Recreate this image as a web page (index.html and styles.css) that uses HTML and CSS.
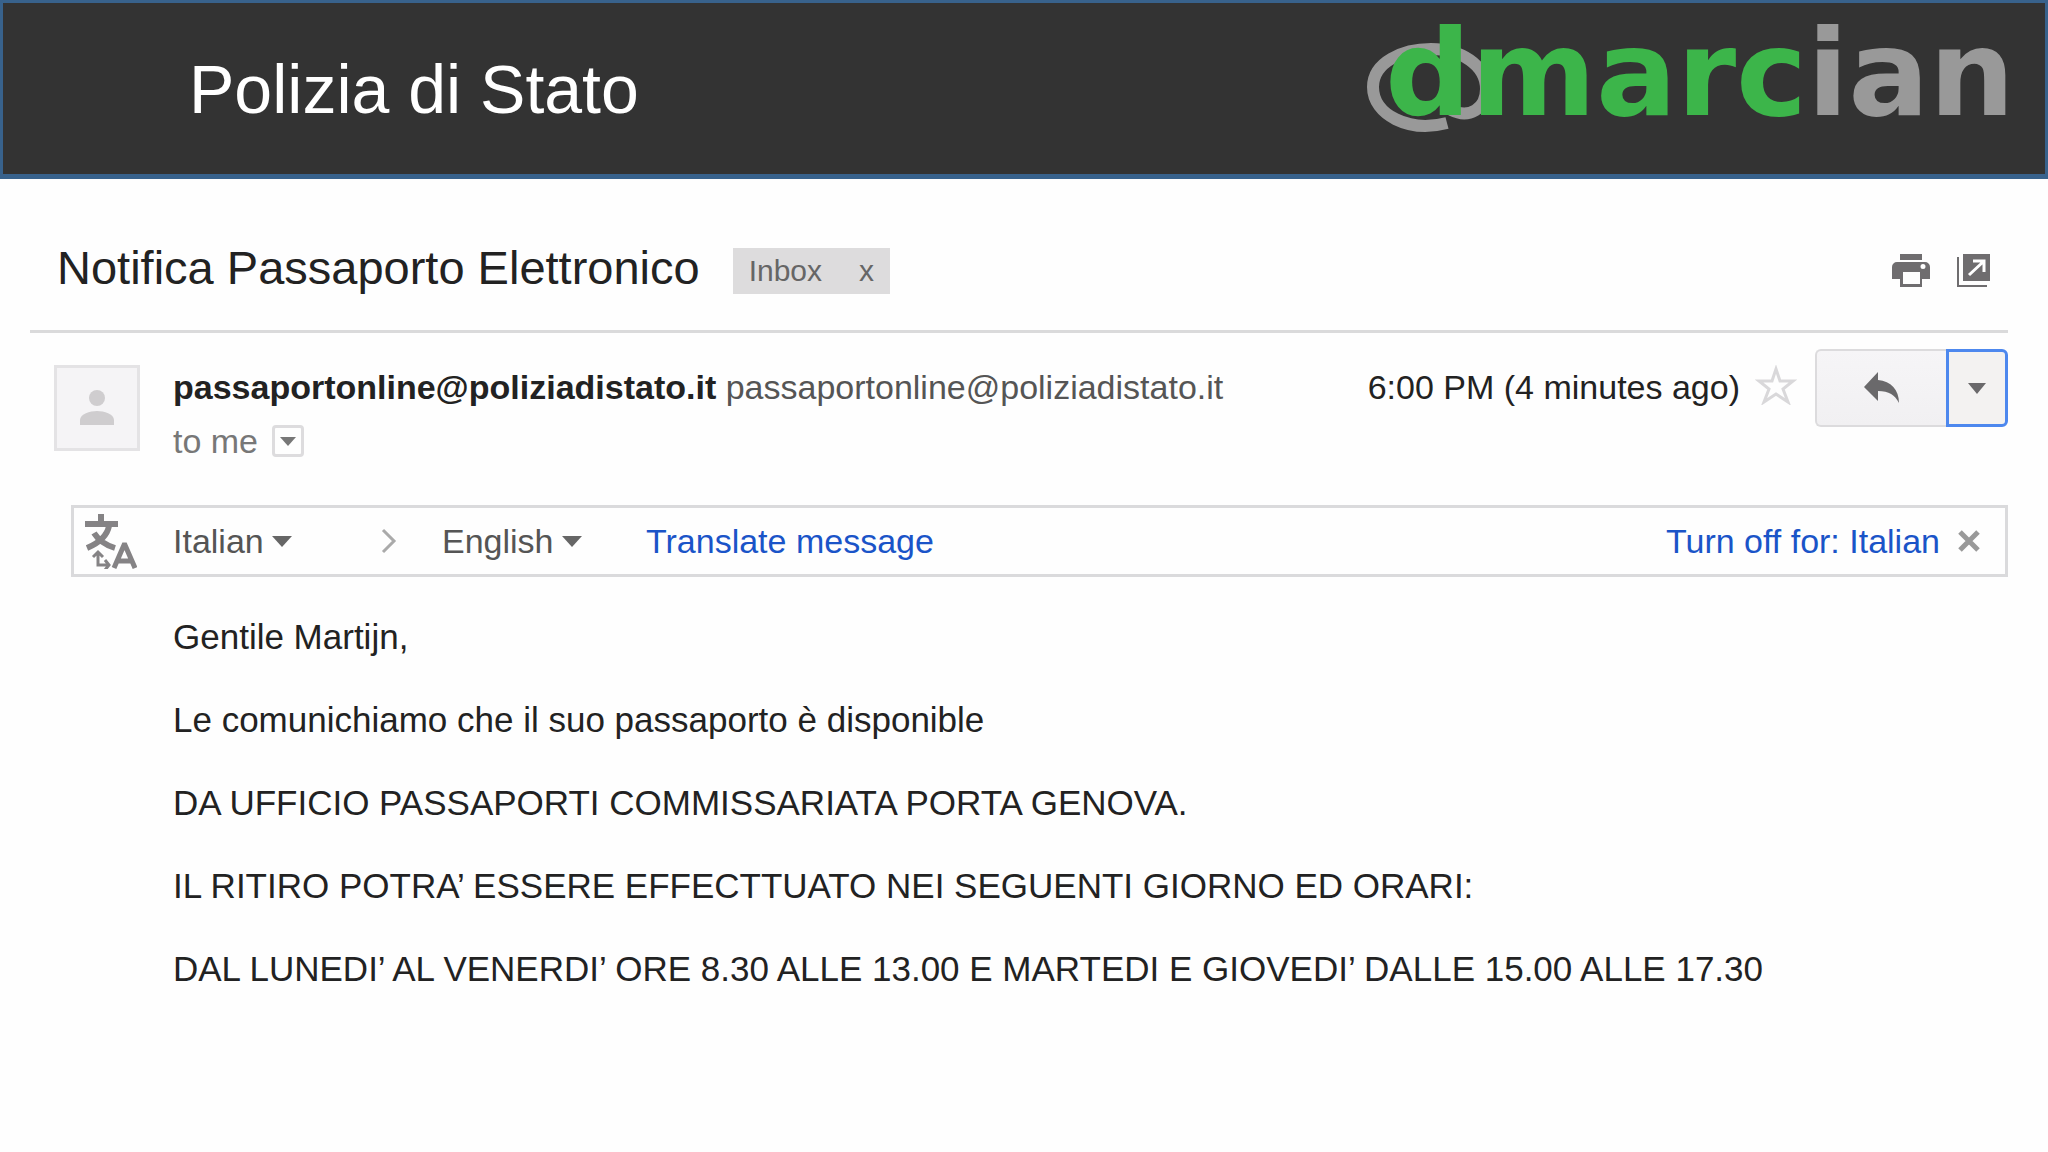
FILE: index.html
```html
<!DOCTYPE html>
<html lang="it">
<head>
  <meta charset="UTF-8">
  <meta name="viewport" content="width=device-width, initial-scale=1.0">
  <title>Polizia di Stato</title>
  <link rel="stylesheet" href="styles.css">
</head>
<body>
  <header>
    <h1>Polizia di Stato</h1>
    <svg class="logo" viewBox="0 0 664 171" role="img" aria-label="dmarcian">
      <path fill="none" stroke="#999" stroke-width="12" d="M80 120C42 130 6 112 6 84C6 59 36 46 64 46C94 46 119 62 119 86C119 106 102 116 84 107"/>
      <text class="logo-text" x="18" y="112"><tspan class="green">dmarc</tspan><tspan class="grey">ian</tspan></text>
    </svg>
  </header>

  <main>
    <div class="subject">
      <h2>Notifica Passaporto Elettronico</h2>
      <div class="label">
        <span>Inbox</span>
        <button aria-label="Remove label">x</button>
      </div>
      <div class="tools">
        <button aria-label="Print">
          <svg width="38" height="33" viewBox="0 0 38 33">
            <path fill="#6f6d6f" fill-rule="evenodd" d="M8 0h22v6H8zM5 8h28a5 5 0 0 1 5 5v12h-8v8H8v-8H0V13a5 5 0 0 1 5-5zM11 18v12h17V18zM31 10a2 2 0 1 0 0 5a2 2 0 0 0 0-5z"/>
          </svg>
        </button>
        <button aria-label="Open in new window">
          <svg width="33" height="33" viewBox="0 0 33 33">
            <path fill="#6f6d6f" d="M6 0h27v27H6zM0 3h2v28h28v2H0z"/>
            <path fill="none" stroke="#fff" stroke-width="3" d="M12 21L26 8M16 7h11v11"/>
          </svg>
        </button>
      </div>
    </div>

    <div class="sender">
      <div class="avatar">
        <svg width="34" height="38" viewBox="0 0 34 38">
          <circle cx="17" cy="9" r="8" fill="#cfcdcf"/>
          <path fill="#cfcdcf" d="M0 36v-5c0-6 10-9 17-9s17 3 17 9v5z"/>
        </svg>
      </div>
      <div class="from">
        <div><b>passaportonline@poliziadistato.it</b> <span class="address">passaportonline@poliziadistato.it</span></div>
        <div class="to">to me
          <button aria-label="Show details"><svg width="16" height="9" viewBox="0 0 16 9"><path fill="#777" d="M0 0h16L8 9z"/></svg></button>
        </div>
      </div>
      <time>6:00 PM (4 minutes ago)</time>
      <button class="star" aria-label="Star">
        <svg width="42" height="40" viewBox="0 0 42 40">
          <path fill="none" stroke="#d9d8da" stroke-width="3" d="M21 4l4 12h13L28 24l5 13l-12-8l-12 8l5-13L4 16h13z"/>
        </svg>
      </button>
      <div class="actions">
        <button class="reply" aria-label="Reply">
          <svg width="36" height="32" viewBox="0 0 36 32">
            <path fill="#6a696b" d="M0 15L14 0v8c13 1 21 10 21 23c-4-8-10-12-21-12v10z"/>
          </svg>
        </button>
        <button class="more" aria-label="More">
          <svg width="18" height="11" viewBox="0 0 18 11"><path fill="#6a696b" d="M0 0h18L9 11z"/></svg>
        </button>
      </div>
    </div>

    <div class="translate">
      <svg class="translate-icon" width="52" height="55" viewBox="0 0 52 55">
        <g fill="none" stroke="#858385">
          <path stroke-width="6" d="M16 0v11M0 10h33M24 12C22 22 14 29 2 34M9 19C14 27 20 31 30 34"/>
          <path stroke-width="3" d="M13 40v11h10M8 43l5-5l5 5M20 46l4 5l-4 5"/>
          <path stroke-width="5" d="M29 54L39 31h1L50 54M33 47h14"/>
        </g>
      </svg>
      <label class="language from-language">
        <select aria-label="Translate from"><option>Italian</option></select>
        <svg width="20" height="11" viewBox="0 0 20 11"><path fill="#666" d="M0 0h20L10 11z"/></svg>
      </label>
      <svg class="chevron" width="16" height="26" viewBox="0 0 16 26"><path fill="none" stroke="#aaa" stroke-width="3" d="M2 2l11 11L2 24"/></svg>
      <label class="language">
        <select aria-label="Translate to"><option>English</option></select>
        <svg width="20" height="11" viewBox="0 0 20 11"><path fill="#666" d="M0 0h20L10 11z"/></svg>
      </label>
      <a class="translate-link" href="#">Translate message</a>
      <a class="turn-off" href="#">Turn off for: Italian</a>
      <button aria-label="Close">
        <svg width="22" height="22" viewBox="0 0 22 22"><path fill="none" stroke="#999" stroke-width="5" d="M2 2l18 18M20 2L2 20"/></svg>
      </button>
    </div>

    <article>
      <p>Gentile Martijn,</p>
      <p>Le comunichiamo che il suo passaporto è disponible</p>
      <p>DA UFFICIO PASSAPORTI COMMISSARIATA PORTA GENOVA.</p>
      <p>IL RITIRO POTRA’ ESSERE EFFECTTUATO NEI SEGUENTI GIORNO ED ORARI:</p>
      <p>DAL LUNEDI’ AL VENERDI’ ORE 8.30 ALLE 13.00 E MARTEDI E GIOVEDI’ DALLE 15.00 ALLE 17.30</p>
    </article>
  </main>
</body>
</html>
```
FILE: styles.css
```css
* {
  box-sizing: border-box;
}

body {
  margin: 0;
  background-color: #fefefe;
  color: #222;
  font-family: "Liberation Sans", Arial, sans-serif;
  font-size: 34px;
  line-height: 40px;
}

button {
  display: flex;
  align-items: center;
  justify-content: center;
  padding: 0;
  border: none;
  background: none;
  color: inherit;
  font: inherit;
  cursor: pointer;
}

svg {
  display: block;
  flex: none;
}

header {
  display: flex;
  justify-content: space-between;
  align-items: center;
  padding: 0 14px 0 186px;
  border: 3px solid #38628c;
  border-bottom-width: 5px;
  background-color: #333;
}

header h1 {
  margin: 0;
  color: #fff;
  font-size: 68px;
  font-weight: normal;
  line-height: 80px;
}

.logo {
  width: 664px;
  height: 171px;
}

.logo-text {
  font-family: "DejaVu Sans", sans-serif;
  font-size: 120px;
  font-weight: bold;
}

.green {
  fill: #3cb54a;
}

.grey {
  fill: #999;
}

main {
  padding: 60px 40px 60px 30px;
}

.subject {
  display: flex;
  align-items: center;
  height: 94px;
  padding: 0 18px 28px 27px;
  border-bottom: 3px solid #dadadb;
}

.subject h2 {
  margin: 0;
  padding-bottom: 6px;
  font-size: 47px;
  font-weight: normal;
  line-height: 56px;
}

.label {
  display: flex;
  align-items: center;
  gap: 37px;
  height: 46px;
  margin-left: 33px;
  padding: 0 16px;
  background-color: #dddcdd;
  color: #666;
  font-size: 30px;
}

.tools {
  display: flex;
  gap: 27px;
  margin-left: auto;
}

.sender {
  display: flex;
  align-items: flex-start;
  padding: 16px 0 0 24px;
}

.avatar {
  display: flex;
  align-items: center;
  justify-content: center;
  width: 86px;
  height: 86px;
  margin-top: 16px;
  border: 3px solid #e4e3e5;
  background-color: #f5f4f6;
}

.from {
  flex: 1;
  margin: 18px 0 0 33px;
}

.address {
  color: #555;
}

.to {
  display: flex;
  align-items: center;
  gap: 14px;
  margin-top: 14px;
  color: #777;
}

.to button {
  width: 32px;
  height: 32px;
  border: 3px solid #dddcde;
  border-radius: 4px;
}

.sender time {
  margin-top: 18px;
}

.star {
  margin: 16px 18px 0 15px;
}

.actions {
  display: flex;
  height: 78px;
}

.reply {
  width: 131px;
  border: 2px solid #dcdbdd;
  border-right: none;
  border-radius: 6px 0 0 6px;
  background: linear-gradient(#f6f5f7, #f1f0f2);
}

.more {
  width: 62px;
  border: 3px solid #4d88ee;
  border-radius: 0 6px 6px 0;
  background-color: #f3f2f1;
}

.translate {
  display: flex;
  align-items: center;
  height: 72px;
  margin: 44px 0 0 41px;
  padding: 0 25px 0 11px;
  border: 3px solid #dadadc;
}

.language {
  display: flex;
  align-items: center;
  gap: 8px;
}

.from-language {
  margin-left: 36px;
}

.language select {
  appearance: none;
  padding: 0;
  border: none;
  background: none;
  color: #555;
  font: inherit;
}

.chevron {
  margin: 0 45px 0 89px;
}

.translate a {
  color: #1a54c8;
  text-decoration: none;
}

.translate-link {
  margin-left: 64px;
}

.turn-off {
  margin: 0 18px 0 auto;
}

article {
  margin: 40px 0 0 143px;
  font-size: 35px;
}

article p {
  margin: 0 0 43px;
}
```
